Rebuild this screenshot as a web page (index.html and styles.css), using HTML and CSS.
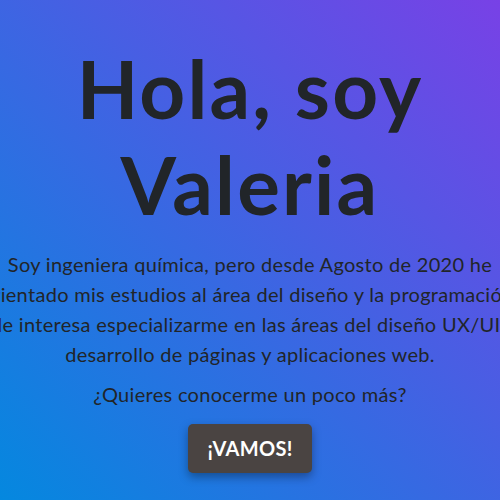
FILE: index.html
```html
<!DOCTYPE html>
<html lang="es">
<head>
<meta charset="utf-8">
<title>Hola, soy Valeria</title>
<link rel="stylesheet" href="styles.css">
</head>
<body>
<main class="hero">
  <h1 class="hero-title">Hola, soy<br>Valeria</h1>
  <p class="hero-text"><span class="line">Soy ingeniera química, pero desde Agosto de 2020 he</span> <span class="line">orientado mis estudios al área del diseño y la programación.</span> <span class="line">Me interesa especializarme en las áreas del diseño UX/UI y</span> <span class="line">desarrollo de páginas y aplicaciones web.</span></p>
  <p class="hero-question">¿Quieres conocerme un poco más?</p>
  <a class="hero-button" href="#">¡VAMOS!</a>
</main>
</body>
</html>
```

FILE: styles.css
```css
html, body {
  margin: 0;
  height: 100%;
}
body {
  background: linear-gradient(to top right, #0488df, #7841e6);
  overflow: hidden;
  font-family: "Lato", "Noto Sans", sans-serif;
  color: #212529;
}
.hero {
  display: flex;
  flex-direction: column;
  align-items: center;
  text-align: center;
  padding-top: 40px;
}
.hero-title {
  margin: 0 0 17px;
  font-size: 80px;
  line-height: 96px;
  font-weight: 700;
  letter-spacing: 2.2px;
}
.hero-text {
  width: 640px;
  flex-shrink: 0;
  margin: 0 0 10px;
  font-size: 20px;
  line-height: 30px;
  letter-spacing: 0.3px;
}
.line {
  display: block;
  white-space: nowrap;
}
.hero-question {
  margin: 0 0 15px;
  font-size: 20px;
  line-height: 30px;
  letter-spacing: 0.3px;
}
.hero-button {
  display: inline-block;
  padding: 10px 19px;
  background: #4a4442;
  color: #fff;
  font-weight: 700;
  font-size: 20px;
  line-height: 29px;
  letter-spacing: 0.3px;
  text-decoration: none;
  border-radius: 5px;
  box-shadow: 0 4px 10px rgba(0, 0, 0, 0.35);
}
```
